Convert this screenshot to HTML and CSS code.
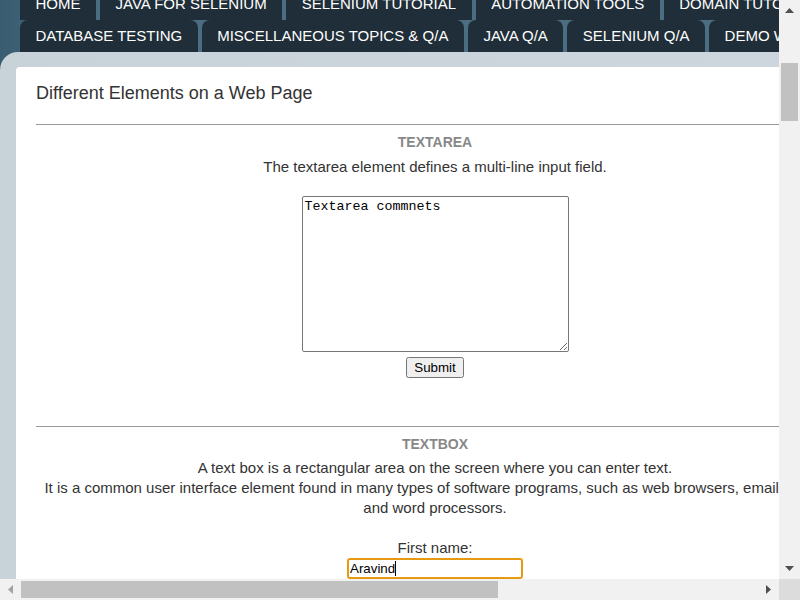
FILE: index.html
```html
<!DOCTYPE html>
<html lang="en">
<head>
<meta charset="utf-8">
<title>Different Elements on a Web Page</title>
<link rel="stylesheet" href="styles.css">
</head>
<body>
<div class="window">
  <div class="viewport">
    <div class="site">
      <nav class="tabs">
        <ul class="tab-row row1">
          <li class="tab">HOME</li>
          <li class="tab">JAVA FOR SELENIUM</li>
          <li class="tab">SELENIUM TUTORIAL</li>
          <li class="tab">AUTOMATION TOOLS</li>
          <li class="tab">DOMAIN TUTORIALS</li>
        </ul>
        <ul class="tab-row row2">
          <li class="tab">DATABASE TESTING</li>
          <li class="tab">MISCELLANEOUS TOPICS &amp; Q/A</li>
          <li class="tab">JAVA Q/A</li>
          <li class="tab">SELENIUM Q/A</li>
          <li class="tab">DEMO WEBSITES</li>
        </ul>
      </nav>
      <div class="panel">
        <main class="post">
          <h2 class="post-title">Different Elements on a Web Page</h2>
          <section class="block">
            <h3 class="block-title">TEXTAREA</h3>
            <p class="block-text">The textarea element defines a multi-line input field.</p>
            <textarea class="comments">Textarea commnets</textarea>
            <button class="submit" type="button">Submit</button>
          </section>
          <section class="block block-second">
            <h3 class="block-title">TEXTBOX</h3>
            <p class="block-text">A text box is a rectangular area on the screen where you can enter text.<br>It is a common user interface element found in many types of software programs, such as web browsers, email clients and word processors.</p>
            <div class="field-label">First name:</div>
            <div class="fake-input">Aravind<span class="caret"></span></div>
          </section>
        </main>
      </div>
    </div>
  </div>
  <div class="vscroll">
    <div class="sb-btn">
      <svg width="9" height="5" viewBox="0 0 9 5"><polygon points="0,5 9,5 4.5,0" fill="#505050"/></svg>
    </div>
    <div class="vtrack"><div class="vthumb"></div></div>
    <div class="sb-btn">
      <svg width="9" height="5" viewBox="0 0 9 5"><polygon points="0,0 9,0 4.5,5" fill="#505050"/></svg>
    </div>
  </div>
  <div class="hscroll">
    <div class="sb-btn">
      <svg width="5" height="9" viewBox="0 0 5 9"><polygon points="5,0 5,9 0,4.5" fill="#a3a3a3"/></svg>
    </div>
    <div class="htrack"><div class="hthumb"></div></div>
    <div class="sb-btn">
      <svg width="5" height="9" viewBox="0 0 5 9"><polygon points="0,0 0,9 5,4.5" fill="#505050"/></svg>
    </div>
  </div>
  <div class="corner"></div>
</div>
</body>
</html>
```
FILE: styles.css
```css
html, body {
  margin: 0;
  padding: 0;
}
body {
  font-family: "Liberation Sans", Arial, sans-serif;
  color: #333;
}
.window {
  display: grid;
  grid-template-columns: 779px 21px;
  grid-template-rows: 579px 21px;
  width: 800px;
  height: 600px;
  overflow: hidden;
}
.viewport {
  overflow: hidden;
  background: linear-gradient(90deg, #395c70 0px, #4a6d82 90px, #4b6e83 100%);
}
.site {
  width: 1204px;
}
/* page is scrolled so that the first tab row is partly above the fold */
.tabs {
  padding-left: 20px;
  margin-top: -12px;
}
.tab-row {
  display: flex;
  gap: 4px;
  list-style: none;
  margin: 0;
  padding: 0;
}
.tab {
  height: 32px;
  line-height: 32px;
  padding: 0 15.5px;
  background: #1f2e38;
  color: #fff;
  font-size: 15px;
  white-space: nowrap;
  border-radius: 8px 8px 0 0;
}
.panel {
  background: linear-gradient(90deg, #c8d2d9, #cfd8de);
  border-radius: 18px 0 0 0;
  padding: 15px 0 15px 16px;
}
.post {
  width: 798px;
  min-height: 4860px;
  background: #fff;
  border-radius: 4px 0 0 0;
  padding: 16px 20px 20px;
}
.post-title {
  margin: 0;
  font-size: 18px;
  font-weight: normal;
  line-height: 21px;
  color: #333;
}
.block {
  border-top: 1px solid #999;
  margin-top: 20px;
  text-align: center;
}
.block-second {
  margin-top: 48px;
}
.block-title {
  margin: 9px 0 0;
  font-size: 14px;
  line-height: 16px;
  font-weight: bold;
  color: #888;
}
.block-text {
  margin: 6.5px 0 0;
  font-size: 15px;
  line-height: 20px;
  color: #333;
}
.comments {
  display: block;
  margin: 19px auto 0;
  width: 267px;
  height: 156px;
  box-sizing: border-box;
  font-family: "Liberation Mono", "Courier New", monospace;
  font-size: 13.33px;
  color: #000;
  border: 1px solid #767676;
  border-radius: 2px;
  padding: 2px;
  resize: both;
}
.submit {
  margin-top: 5px;
  font-family: "Liberation Sans", Arial, sans-serif;
  font-size: 13.33px;
}
.field-label {
  margin-top: 20px;
  font-size: 15px;
  line-height: 20px;
}
.fake-input {
  margin: 0 auto;
  width: 176px;
  height: 21px;
  box-sizing: border-box;
  border: 2px solid #e59a12;
  border-radius: 3px;
  padding: 0 1px;
  font-size: 13.33px;
  line-height: 17px;
  color: #000;
  text-align: left;
}
.caret {
  display: inline-block;
  width: 1px;
  height: 15px;
  background: #000;
  vertical-align: -3px;
}
/* scrollbars */
.vscroll {
  display: flex;
  flex-direction: column;
  background: #f1f1f1;
}
.hscroll {
  display: flex;
  background: #f1f1f1;
}
.sb-btn {
  flex: 0 0 21px;
  height: 21px;
  display: flex;
  align-items: center;
  justify-content: center;
}
.vtrack {
  flex: 1;
  padding: 42px 2px 0;
}
.vthumb {
  height: 58px;
  background: #c1c1c1;
}
.htrack {
  flex: 1;
  padding: 2px 0;
}
.hthumb {
  width: 477px;
  height: 17px;
  background: #c1c1c1;
}
.corner {
  background: #dcdcdc;
}
```
